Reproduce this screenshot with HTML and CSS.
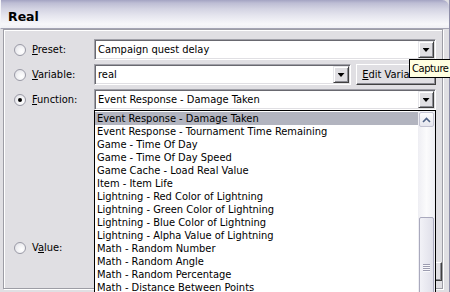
FILE: index.html
```html
<!DOCTYPE html>
<html>
<head>
<meta charset="utf-8">
<link rel="stylesheet" href="styles.css">
</head>
<body>
<div class="window">
  <div class="titlebar">Real</div>
  <div class="group">
    <div class="row">
      <span class="radio"></span>
      <span class="lbl"><u>P</u>reset:</span>
      <div class="combo wide">
        <span class="ctext">Campaign quest delay</span>
        <span class="arrow"><span class="tri"></span></span>
      </div>
    </div>
    <div class="row">
      <span class="radio"></span>
      <span class="lbl"><u>V</u>ariable:</span>
      <div class="combo var">
        <span class="ctext">real</span>
        <span class="arrow"><span class="tri"></span></span>
      </div>
      <span class="btn"><u>E</u>dit Variables</span>
    </div>
    <div class="row">
      <span class="radio checked"></span>
      <span class="lbl"><u>F</u>unction:</span>
      <div class="combo wide fn">
        <span class="ctext">Event Response - Damage Taken</span>
        <span class="arrow"><span class="tri"></span></span>
        <div class="dropdown">
          <div class="items">
            <div class="item sel">Event Response - Damage Taken</div>
            <div class="item">Event Response - Tournament Time Remaining</div>
            <div class="item">Game - Time Of Day</div>
            <div class="item">Game - Time Of Day Speed</div>
            <div class="item">Game Cache - Load Real Value</div>
            <div class="item">Item - Item Life</div>
            <div class="item">Lightning - Red Color of Lightning</div>
            <div class="item">Lightning - Green Color of Lightning</div>
            <div class="item">Lightning - Blue Color of Lightning</div>
            <div class="item">Lightning - Alpha Value of Lightning</div>
            <div class="item">Math - Random Number</div>
            <div class="item">Math - Random Angle</div>
            <div class="item">Math - Random Percentage</div>
            <div class="item">Math - Distance Between Points</div>
            <div class="item">Math - Angle Between Points</div>
          </div>
          <div class="sb">
            <span class="sb-up">
              <svg width="9" height="6" viewBox="0 0 9 6"><path d="M1 5 L4.5 1.5 L8 5" fill="none" stroke="#4d6185" stroke-width="1.6"/></svg>
            </span>
            <span class="sb-space"></span>
            <span class="sb-thumb"><span class="grip"></span></span>
          </div>
        </div>
      </div>
    </div>
    <div class="row value">
      <span class="radio"></span>
      <span class="lbl">V<u>a</u>lue:</span>
    </div>
    <div class="row hidden-row">
      <span class="small-btn"></span>
    </div>
  </div>
  <div class="tip">Capture</div>
</div>
</body>
</html>
```

FILE: styles.css
```css
* { box-sizing: border-box; }
html, body { margin: 0; padding: 0; }
body {
  width: 450px;
  height: 292px;
  overflow: hidden;
  background: #e0dfe3;
  font-family: "DejaVu Sans Condensed", "Liberation Sans", sans-serif;
  font-size: 11px;
  color: #000;
}
.window {
  position: relative;
  width: 450px;
  height: 292px;
  display: flex;
  flex-direction: column;
  background: #e0dfe3;
  border-right: 1px solid #8e8ea8;
}
.titlebar {
  flex: none;
  height: 29px;
  padding: 9px 0 0 7px;
  font-family: "DejaVu Sans", sans-serif;
  font-weight: bold;
  font-size: 12.5px;
  border-top-right-radius: 7px;
  border-left: 1px solid #f4f4f8;
  border-bottom: 1px solid #a4a4b4;
  background: linear-gradient(#a3a3c2 0px, #bdbdd4 3px, #d4d4e3 9px, #e6e6ef 16px, #f7f7fa 24px, #f0f0f4 28px);
}
.group {
  flex: 1;
  margin: 0 6px 3px 3px;
  border: 1px solid #9d9da5;
  box-shadow: inset 1px 1px 0 #ffffff, 1px 1px 0 #ffffff;
  padding: 9px 6px 0 10px;
}
.row {
  display: flex;
  align-items: center;
  height: 21px;
  margin-bottom: 4px;
}
.radio {
  flex: none;
  width: 12px;
  height: 12px;
  border-radius: 50%;
  border: 1px solid #9a9aa6;
  background: radial-gradient(circle at 65% 65%, #ffffff 0, #f4f4f6 40%, #dcdce2 100%);
  display: flex;
  align-items: center;
  justify-content: center;
}
.radio.checked::after {
  content: "";
  width: 4px;
  height: 4px;
  border-radius: 50%;
  background: #000;
}
.lbl {
  flex: none;
  width: 62px;
  margin-left: 6px;
  white-space: nowrap;
}
.combo {
  position: relative;
  display: flex;
  height: 21px;
  background: #fff;
  border: 1px solid;
  border-color: #a0a0a8 #ffffff #ffffff #a0a0a8;
  box-shadow: inset 1px 1px 0 #696970, inset -1px -1px 0 #e0dfe3;
  padding: 1px;
}
.combo.wide { flex: 1; }
.combo.var { flex: none; width: 257px; }
.ctext {
  flex: 1;
  padding-left: 2px;
  line-height: 17px;
  white-space: nowrap;
  overflow: hidden;
}
.arrow {
  flex: none;
  width: 16px;
  height: 17px;
  background: #e0dfe3;
  border: 1px solid;
  border-color: #e6e6ea #404040 #404040 #e6e6ea;
  box-shadow: inset 1px 1px 0 #ffffff, inset -1px -1px 0 #8c8c94;
  display: flex;
  align-items: center;
  justify-content: center;
}
.tri {
  width: 7px;
  height: 4px;
  background: #000;
  clip-path: polygon(0 0, 100% 0, 50% 100%);
  margin-top: 1px;
}
.btn {
  flex: none;
  margin-left: 5px;
  width: 80px;
  height: 21px;
  background: #e0dfe3;
  border: 1px solid;
  border-color: #ffffff #404040 #404040 #ffffff;
  box-shadow: inset -1px -1px 0 #8c8c94;
  display: flex;
  align-items: center;
  justify-content: center;
  white-space: nowrap;
}
.dropdown {
  position: absolute;
  left: -1px;
  right: -1px;
  top: calc(100% + 1px);
  height: 190px;
  border: 1px solid #000;
  background: #fff;
  display: flex;
  z-index: 2;
}
.items { flex: 1; overflow: hidden; padding-top: 1px; }
.item {
  height: 13px;
  line-height: 13px;
  padding-left: 2px;
  white-space: nowrap;
}
.item.sel { background: #b2b4bf; }
.sb {
  flex: none;
  width: 17px;
  background: linear-gradient(90deg, #eeeef3, #fbfbfc 50%, #eeeef3);
  display: flex;
  flex-direction: column;
  align-items: center;
}
.sb-up {
  flex: none;
  width: 15px;
  height: 15px;
  margin-top: 1px;
  border: 1px solid #c3c3d2;
  border-radius: 2px;
  background: linear-gradient(#fcfcfd, #e6e6ee);
  display: flex;
  align-items: center;
  justify-content: center;
}
.sb-space { flex: none; height: 90px; }
.sb-thumb {
  flex: 1;
  width: 15px;
  border: 1px solid #a9a9bd;
  border-radius: 2px;
  background: linear-gradient(90deg, #f2f2f7, #e0e0ea);
  display: flex;
  justify-content: center;
  padding-top: 46px;
}
.grip {
  width: 7px;
  height: 8px;
  background: repeating-linear-gradient(#9c9cb0 0 1px, #fafafc 1px 2px);
}
.row.value { margin-top: 127px; }
.hidden-row { justify-content: flex-end; height: 19px; margin-top: 0; }
.small-btn {
  width: 17px;
  height: 19px;
  margin-right: -6px;
  border: 1px solid;
  border-color: #ffffff #404040 #404040 #ffffff;
  box-shadow: inset -1px -1px 0 #8c8c94;
}
.tip {
  position: absolute;
  left: 409px;
  top: 59px;
  width: 41px;
  height: 19px;
  padding: 0 0 0 2px;
  line-height: 17px;
  letter-spacing: -0.4px;
  border: 1px solid #000;
  border-right: none;
  background: #ffffe1;
  white-space: nowrap;
  z-index: 3;
}
```
